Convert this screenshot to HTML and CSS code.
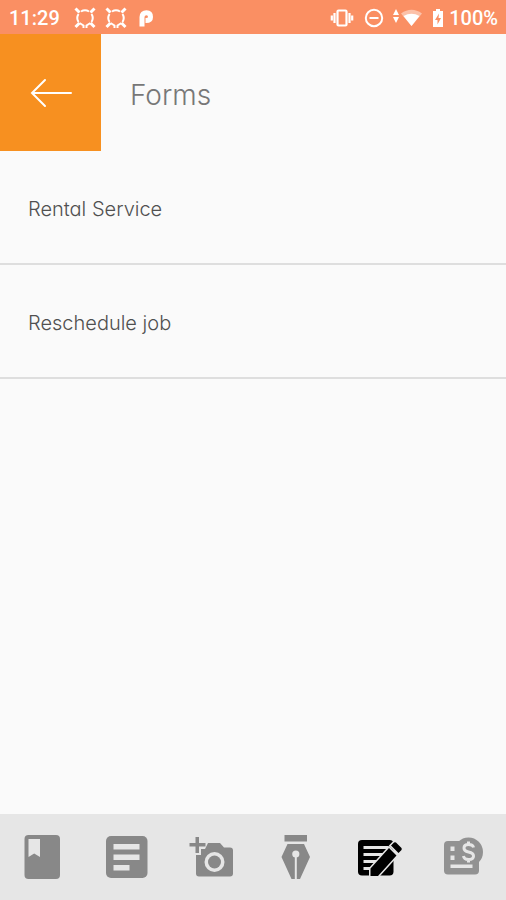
FILE: index.html
```html
<!DOCTYPE html>
<html lang="en">
<head>
<meta charset="utf-8">
<meta name="viewport" content="width=device-width, initial-scale=1">
<title>Forms</title>
<link rel="stylesheet" href="styles.css">
</head>
<body>
<div class="status">
  <span class="clock">11:29</span>
  <svg class="notice" viewBox="0 0 22 22" aria-hidden="true"><use href="#ring"/></svg>
  <svg class="notice" viewBox="0 0 22 22" aria-hidden="true">
    <g id="ring" fill="none" stroke="#fff">
      <path stroke-width="2" d="M7 4.500Q11 2 15 4.500M4.500 7Q2 11 4.500 15M17.500 7Q20 11 17.500 15M5.500 16L9.500 18.500V21M16.500 16L12.500 18.500V21"/>
      <path stroke-width="3" d="M1.500 1.500L5.500 5.500M20.500 1.500L16.500 5.500M1.500 20L5.500 16M20.500 20L16.500 16"/>
    </g>
  </svg>
  <svg class="notice" viewBox="0 0 22 22" aria-hidden="true"><path fill="none" stroke="#fff" stroke-width="5" d="M6 19.500V10Q6 5.800 10.500 5.800Q14.500 5.800 14.500 10Q14.500 13.500 10 13.500H9.500"/></svg>
  <span class="space"></span>
  <svg class="vibrate" viewBox="0 0 24 20" aria-hidden="true"><g fill="none" stroke="#fff" stroke-width="2.200"><rect x="7.500" y="2.500" width="9" height="15" rx="1"/><path d="M4.500 5v10M19.500 5v10M1.800 7.500v5M22.200 7.500v5"/></g></svg>
  <svg class="quiet" viewBox="0 0 20 20" aria-hidden="true"><g fill="none" stroke="#fff" stroke-width="2"><circle cx="10" cy="10" r="8.200"/><path d="M5.500 10h9"/></g></svg>
  <svg class="wifi" viewBox="0 0 30 20" aria-hidden="true"><g fill="#fff"><path d="M4 1l3 6H1zM4 15l3-6H1z"/><path opacity=".45" d="M9 5.500Q19.500 -2 30 5.500L19.500 18z"/><path d="M11.500 8Q19.500 3.500 27.500 8L19.500 18z"/></g></svg>
  <svg class="battery" viewBox="0 0 12 20" aria-hidden="true"><path fill="#fff" d="M4 1h4v2h3v16H1V3h3z"/><path fill="#fa8f63" d="M7 5.500L3 12h2.500v4.500L9 10H6.500z"/></svg>
  <span class="charge">100%</span>
</div>
<header class="bar">
  <button class="back" type="button" aria-label="Back">
    <svg viewBox="0 0 42 30" aria-hidden="true"><path fill="none" stroke="#fff" stroke-width="2" stroke-linecap="round" d="M2 15H41M15 2L2 15L15 28"/></svg>
  </button>
  <h1>Forms</h1>
</header>
<main>
  <ul class="forms">
    <li><a href="#rental">Rental Service</a></li>
    <li><a href="#reschedule">Reschedule job</a></li>
  </ul>
</main>
<nav class="tabs">
  <a href="#job" aria-label="Job"><svg viewBox="0 0 48 48"><rect x="6.500" y="2" width="35.500" height="44" rx="4"/><path class="cut" d="M10.500 6H22V24L16.200 20.500L10.500 24z"/></svg></a>
  <a href="#notes" aria-label="Notes"><svg viewBox="0 0 48 48"><rect x="4" y="3" width="41.500" height="42" rx="5"/><path class="cut" d="M11.500 11h26v5.500h-26zM11.500 21.500h26V27h-26zM11.500 32h16v5.500h-16z"/></svg></a>
  <a href="#photos" aria-label="Add photo"><svg viewBox="0 0 48 48"><path d="M21 10H33L37 14.500H43Q46 14.500 46 17.500V40.500Q46 43.500 43 43.500H12Q9 43.500 9 40.500V22H14V16H18z"/><circle class="cut" cx="27.500" cy="29" r="10"/><circle cx="27.500" cy="29" r="6.500"/><path d="M8.500 4h3.500v6h6.500v3.500H12V20H8.500v-6.500H2.500V10h6z"/></svg></a>
  <a href="#sign" aria-label="Signature"><svg viewBox="0 0 48 48"><path d="M13.500 2H36V8.500H13.500zM16.500 11H33L39 24L29 46H20.500L10.500 24z"/><circle class="cut" cx="24.800" cy="21" r="3.600"/><path class="cut" d="M23.800 22h2v24h-2z"/></svg></a>
  <a class="on" href="#forms" aria-label="Forms" aria-current="page"><svg viewBox="0 0 48 48"><rect x="3" y="7" width="35.500" height="35.500" rx="4"/><path class="cut" d="M8.500 13h25v3h-25zM8.500 20h22v3h-22zM8.500 27h15v3h-15zM8.500 34h9v3h-9z"/><path class="edge" d="M15.500 43V35.500L34 15L41.500 22.500L23 43zM36 12.500L39 9.500Q40 9 41 9.500L46.500 15Q47 16 46.500 17L43.500 20z"/></svg></a>
  <a class="soft" href="#invoice" aria-label="Invoice"><svg viewBox="0 0 48 48"><rect x="4" y="8" width="35" height="33.500" rx="4"/><circle cx="28.500" cy="19" r="14.500"/><path class="cut" d="M10.500 13.500h4v4.500h-4zM10.500 22.500h4V27h-4zM10.500 31.500h22V35h-22z"/><path class="line" d="M33.500 14.500Q33 11.500 28.500 11.500Q24 11.500 24 15Q24 18 28.500 19Q33.500 20 33.500 23Q33.500 26.500 28.500 26.500Q24 26.500 23.500 23M28.500 8.500V12M28.500 26V29.500"/></svg></a>
</nav>
</body>
</html>
```
FILE: styles.css
```css
* { box-sizing: border-box; }
body {
  margin: 0;
  min-height: 100vh;
  display: flex;
  flex-direction: column;
  background: #fafafa;
  color: #666;
  font-family: Inter, "Liberation Sans", sans-serif;
  font-feature-settings: "cv11";
}
.status {
  display: flex;
  align-items: center;
  height: 34px;
  padding: 2px 8px 0 9px;
  background: #fa8f63;
  color: #fff;
  font: 500 20px/24px Roboto, sans-serif;
}
.clock { margin-right: 14px; }
.space { flex: 1; }
.notice { width: 22px; height: 22px; margin-right: 9px; }
.vibrate { width: 24px; height: 20px; margin-right: 10px; }
.quiet { width: 20px; height: 20px; margin-right: 8px; }
.wifi { width: 30px; height: 20px; margin-right: 10px; }
.battery { width: 12px; height: 20px; margin-right: 5px; }
.bar { display: flex; align-items: center; }
.back {
  display: grid;
  place-items: center;
  width: 101px;
  height: 117px;
  margin: 0;
  padding: 0;
  border: 0;
  background: #f79020;
}
.back svg { width: 42px; height: 30px; }
h1 {
  margin: 0 0 0 29px;
  padding-top: 4px;
  font-size: 28px;
  line-height: 36px;
  font-weight: 300;
  color: #777;
}
main { flex: 1; }
.forms { margin: 0; padding: 0; list-style: none; }
.forms a {
  display: flex;
  align-items: center;
  height: 114px;
  padding: 4px 28px 0;
  border-bottom: 2px solid #dedede;
  color: #505050;
  font-size: 20px;
  font-weight: 300;
  line-height: 28px;
  text-decoration: none;
}
.tabs {
  display: grid;
  grid-template-columns: repeat(6, 1fr);
  height: 86px;
  background: #e6e6e6;
}
.tabs a { display: grid; place-items: center; }
.tabs svg { width: 48px; height: 48px; fill: #888; }
.tabs .on svg { fill: #000; }
.tabs .soft svg { fill: #929292; }
.tabs .cut { fill: #e6e6e6; }
.tabs .edge { stroke: #e6e6e6; stroke-width: 3; paint-order: stroke; }
.tabs .line { fill: none; stroke: #e6e6e6; stroke-width: 3; }
```
